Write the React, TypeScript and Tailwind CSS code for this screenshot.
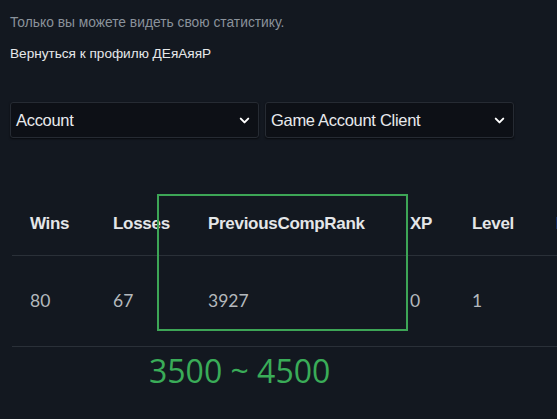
import { ChevronDown } from 'lucide-react';

const columns = [
  { label: 'Wins', value: '80', width: 'w-[83px]' },
  { label: 'Losses', value: '67', width: 'w-[95px]' },
  { label: 'PreviousCompRank', value: '3927', width: 'w-[202px]' },
  { label: 'XP', value: '0', width: 'w-[62px]' },
  { label: 'Level', value: '1', width: 'w-[84px]' },
  { label: 'Rank', value: '1', width: 'w-[90px]' },
];

function Select({ label }: { label: string }) {
  return (
    <div className="w-[249px] h-[36px] bg-[#0d1016] border border-[#262b33] rounded-[3px] flex items-center justify-between pl-[5px] pr-[6px] shadow-[0_1px_2px_rgba(0,0,0,0.6)]">
      <span className="text-[16.5px] text-[#e8eaed] tracking-[-0.3px]">{label}</span>
      <ChevronDown size={15} strokeWidth={3.2} className="text-white" />
    </div>
  );
}

export default function App() {
  return (
    <div
      className="relative w-[557px] h-[419px] overflow-hidden bg-[#131820] text-white"
      style={{ fontFamily: '"Liberation Sans", Arial, sans-serif' }}
    >
      <div className="pl-[10px] pt-[14px]">
        <p className="text-[13.8px] text-[#8a929b] leading-[18px]">Только вы можете видеть свою статистику.</p>
        <p className="text-[13.6px] text-[#e6e8ea] leading-[18px] mt-[13px]">Вернуться к профилю ДЕяАяяР</p>
      </div>

      <div className="flex gap-[6px] pl-[10px] mt-[39px]">
        <Select label="Account" />
        <Select label="Game Account Client" />
      </div>

      {/* stats table */}
      <div className="ml-[12px] mt-[54px]">
        <div className="flex h-[64px] items-center border-b border-[#2a3038]">
          {columns.map((c) => (
            <div key={c.label} className={`${c.width} shrink-0 pl-[18px] text-[17px] font-bold text-[#e4e6e8] tracking-[-0.3px]`}>
              {c.label}
            </div>
          ))}
        </div>
        <div className="flex h-[91px] items-center border-b border-[#2a3038] font-['Lato',sans-serif]">
          {columns.map((c) => (
            <div key={c.label} className={`${c.width} shrink-0 pl-[18px] text-[17.5px] text-[#b4b8bd]`}>
              {c.value}
            </div>
          ))}
        </div>
        <p className="ml-[137px] mt-[2px] text-[32px] leading-[44px] text-[#3aac58] font-['Open_Sans',sans-serif]">3500 ~ 4500</p>
      </div>

      {/* annotation box */}
      <div className="absolute left-[157px] top-[194px] w-[251px] h-[137px] border-2 border-[#3da556]" />
    </div>
  );
}
